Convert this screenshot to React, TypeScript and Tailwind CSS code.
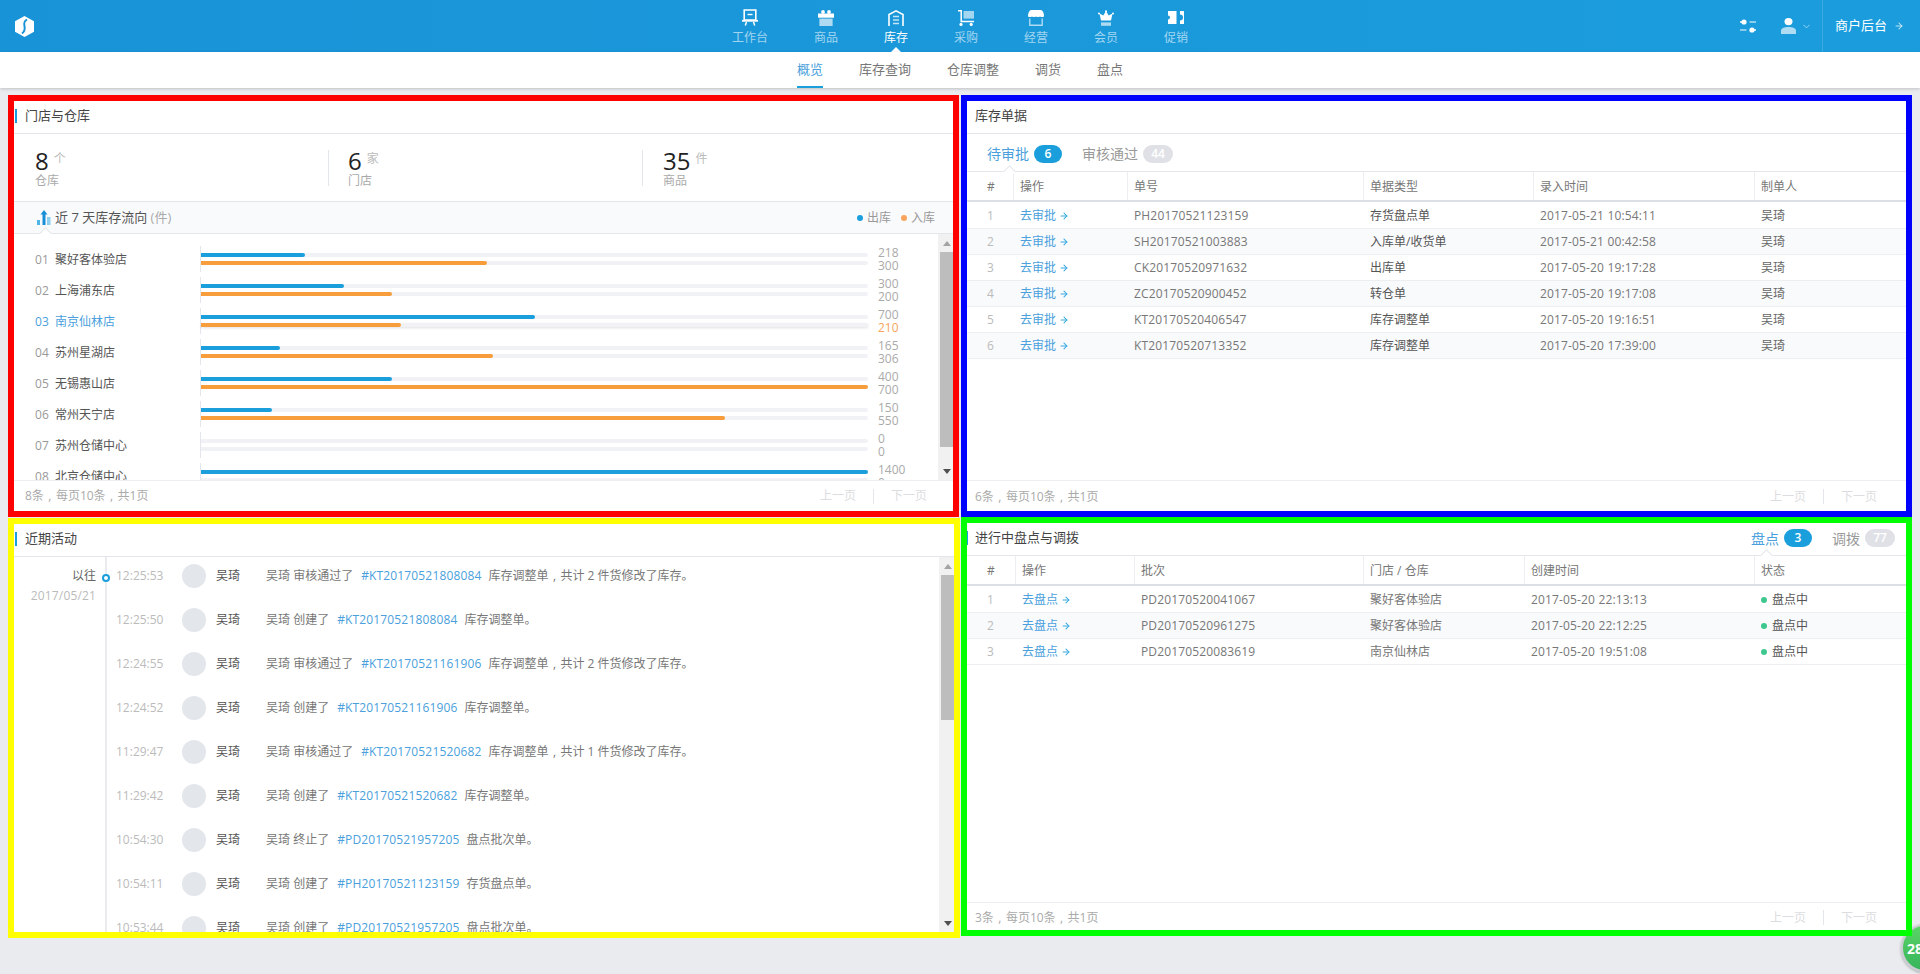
import { ArrowRight, ChevronDown } from "lucide-react";
import type { ReactNode } from "react";

const navItems = [
  { label: "工作台", icon: <BoardIcon /> },
  { label: "商品", icon: <GoodsIcon /> },
  { label: "库存", icon: <StockIcon />, active: true },
  { label: "采购", icon: <CartIcon /> },
  { label: "经营", icon: <ShopIcon /> },
  { label: "会员", icon: <CrownIcon /> },
  { label: "促销", icon: <TicketIcon /> },
];

const subNav = ["概览", "库存查询", "仓库调整", "调货", "盘点"];

const flowRows = [
  { name: "聚好客体验店", out: 218, into: 300 },
  { name: "上海浦东店", out: 300, into: 200 },
  { name: "南京仙林店", out: 700, into: 210, active: true },
  { name: "苏州星湖店", out: 165, into: 306 },
  { name: "无锡惠山店", out: 400, into: 700 },
  { name: "常州天宁店", out: 150, into: 550 },
  { name: "苏州仓储中心", out: 0, into: 0 },
  { name: "北京仓储中心", out: 1400, into: 0 },
];

const orderRows = [
  ["PH20170521123159", "存货盘点单", "2017-05-21 10:54:11", "吴琦"],
  ["SH20170521003883", "入库单/收货单", "2017-05-21 00:42:58", "吴琦"],
  ["CK20170520971632", "出库单", "2017-05-20 19:17:28", "吴琦"],
  ["ZC20170520900452", "转仓单", "2017-05-20 19:17:08", "吴琦"],
  ["KT20170520406547", "库存调整单", "2017-05-20 19:16:51", "吴琦"],
  ["KT20170520713352", "库存调整单", "2017-05-20 17:39:00", "吴琦"],
];

const checkRows = [
  ["PD20170520041067", "聚好客体验店", "2017-05-20 22:13:13"],
  ["PD20170520961275", "聚好客体验店", "2017-05-20 22:12:25"],
  ["PD20170520083619", "南京仙林店", "2017-05-20 19:51:08"],
];

const activities = [
  ["12:25:53", "审核通过了", "#KT20170521808084", "库存调整单，共计 2 件货修改了库存。"],
  ["12:25:50", "创建了", "#KT20170521808084", "库存调整单。"],
  ["12:24:55", "审核通过了", "#KT20170521161906", "库存调整单，共计 2 件货修改了库存。"],
  ["12:24:52", "创建了", "#KT20170521161906", "库存调整单。"],
  ["11:29:47", "审核通过了", "#KT20170521520682", "库存调整单，共计 1 件货修改了库存。"],
  ["11:29:42", "创建了", "#KT20170521520682", "库存调整单。"],
  ["10:54:30", "终止了", "#PD20170521957205", "盘点批次单。"],
  ["10:54:11", "创建了", "#PH20170521123159", "存货盘点单。"],
  ["10:53:44", "创建了", "#PD20170521957205", "盘点批次单。"],
];

function BoardIcon() {
  return (
    <svg width="16" height="17" viewBox="0 0 16 17" fill="none" stroke="white">
      <path d="M2.2 1h11.6v10H2.2z" strokeWidth="1.6" />
      <path d="M5.5 5.5h5" strokeWidth="1.4" />
      <path d="M0 11.8h16" strokeWidth="1.8" />
      <path d="M4.5 13l-1.2 3.5M11.5 13l1.2 3.5" strokeWidth="1.5" />
    </svg>
  );
}

function GoodsIcon() {
  return (
    <svg width="16" height="16" viewBox="0 0 16 16" fill="white">
      <circle cx="5" cy="2" r="1.9" />
      <circle cx="11" cy="2" r="1.9" />
      <rect x="0" y="3.5" width="16" height="4.2" />
      <rect x="1.4" y="8.6" width="13.2" height="7.4" opacity="0.65" />
    </svg>
  );
}

function StockIcon() {
  return (
    <svg width="16" height="16" viewBox="0 0 16 16" fill="none" stroke="white">
      <path d="M1 16V4.6L8 .9l7 3.7V16" strokeWidth="1.6" />
      <path d="M5 6.5h6M5 10h6M5 13.5h6" strokeWidth="1.3" opacity="0.75" />
    </svg>
  );
}

function CartIcon() {
  return (
    <svg width="16" height="16" viewBox="0 0 16 16" fill="none">
      <path d="M0 .8h3.2v10.8H16" stroke="white" strokeWidth="1.5" />
      <circle cx="3" cy="14.4" r="1.6" fill="white" />
      <circle cx="13.2" cy="14.4" r="1.6" fill="white" />
      <rect x="5.5" y="1" width="10.5" height="7.6" fill="white" opacity="0.6" />
    </svg>
  );
}

function ShopIcon() {
  return (
    <svg width="16" height="16" viewBox="0 0 16 16" fill="none">
      <path d="M3 0h10q3 1 3 6.500c-1.300.8-2.700.8-4 0-1.300.8-2.700.8-4 0-1.300.8-2.700.8-4 0-1.300.8-2.700.8-4 0Q0 1 3 0z" fill="white" />
      <path d="M1.800 8.500v6.700h12.400V8.500" stroke="white" strokeWidth="1.400" opacity="0.65" />
    </svg>
  );
}

function CrownIcon() {
  return (
    <svg width="16" height="16" viewBox="0 0 16 16" fill="white">
      <path d="M8 1l2.700 4.600L14.500 3.500 13 10.500H3L1.500 3.500l3.800 2.100z" />
      <circle cx="8" cy="1.200" r="1" />
      <circle cx="1" cy="3.400" r="1" />
      <circle cx="15" cy="3.400" r="1" />
      <rect x="3" y="12.400" width="10" height="3.400" opacity="0.65" />
    </svg>
  );
}

function TicketIcon() {
  return (
    <svg width="16" height="13" viewBox="0 0 16 13" fill="white">
      <path d="M0 0h8.500v13H0V8.500a2 2 0 0 0 0-4z" />
      <path d="M12 0h4v13h-4V9.500a3 3 0 0 0 0-6z" />
    </svg>
  );
}

function SlidersIcon() {
  return (
    <svg width="16" height="14" viewBox="0 0 16 14" fill="white">
      <circle cx="4" cy="3" r="2.600" />
      <rect x="0" y="2.300" width="4" height="1.400" />
      <rect x="9.500" y="2.300" width="6.500" height="1.400" opacity="0.7" />
      <circle cx="12" cy="11" r="2.600" />
      <rect x="12" y="10.300" width="4" height="1.400" />
      <rect x="0" y="10.300" width="6.500" height="1.400" opacity="0.7" />
    </svg>
  );
}

function UserIcon() {
  return (
    <svg width="15" height="16" viewBox="0 0 15 16" fill="white">
      <ellipse cx="7.500" cy="3.600" rx="4" ry="3.600" />
      <path d="M0 16v-3c0-3 3-4 7.500-4s7.500 1 7.500 4v3z" opacity="0.65" />
    </svg>
  );
}

function Logo() {
  return (
    <svg width="19" height="21" viewBox="0 0 19 21">
      <path d="M9.500 0L19 5.200v10.600L9.500 21 0 15.800V5.200z" fill="white" />
      <path d="M12 3.500C5 7.500 14 12.500 7 17.500" fill="none" stroke="#1993d7" strokeWidth="2" />
    </svg>
  );
}

function FlowIcon() {
  return (
    <svg width="14" height="15" viewBox="0 0 14 15">
      <rect x="0" y="10" width="3" height="5" fill="#4fb4e6" />
      <path d="M7 0l3.500 4.500H8.500V15h-3V4.500h-2z" fill="#1a8fd8" />
      <rect x="10" y="7" width="3.500" height="8" fill="#8fd0f0" />
    </svg>
  );
}

// the comma in the reference sits centred in its full-width cell
function Commas({ text }: { text: string }) {
  return (
    <>
      {text.split("，").map((part, i) => (
        <span key={i}>
          {i > 0 && <span className="inline-block w-3 text-center">,</span>}
          {part}
        </span>
      ))}
    </>
  );
}

function Notch({ className }: { className: string }) {
  return <span className={`absolute bottom-[-5px] h-[9px] w-[9px] rotate-45 border-l border-t border-[#e3e6ea] bg-white ${className}`} />;
}

function Badge({ n, on, className }: { n: number; on?: boolean; className: string }) {
  return (
    <span className={`flex h-[18px] items-center justify-center rounded-full text-[12px] font-semibold text-white ${on ? "bg-[#1a9fdc]" : "bg-[#dfe1e6]"} ${className}`}>
      {n}
    </span>
  );
}

function Scrollbar({ thumb }: { thumb: string }) {
  return (
    <div className="flex w-[15px] shrink-0 flex-col bg-[#f1f1f1]">
      <div className="flex h-[18px] shrink-0 items-center justify-center pl-[2px]">
        <svg width="8" height="5" viewBox="0 0 8 5"><path d="M4 0l4 5H0z" fill="#a3a3a3" /></svg>
      </div>
      <div className={`ml-[2px] shrink-0 bg-[#bdbdbd] ${thumb}`} />
      <div className="flex flex-1 items-end justify-center pb-[6px] pl-[2px]">
        <svg width="8" height="5" viewBox="0 0 8 5"><path d="M4 5l4-5H0z" fill="#505050" /></svg>
      </div>
    </div>
  );
}

function Footer({ text, className }: { text: string; className: string }) {
  return (
    <div className={`flex shrink-0 items-center justify-between border-t border-[#eceef1] bg-white text-[12px] ${className}`}>
      <span className="text-[#aaa]"><Commas text={text} /></span>
      <div className="flex items-center text-[#dcdde0]">
        <span>上一页</span>
        <span className="mx-[17px] h-[15px] w-px bg-[#e3e6ea]" />
        <span>下一页</span>
      </div>
    </div>
  );
}

function Panel({ frame, title, tick, bar = "pb-[2px]", right, children }: { frame: string; title: string; tick: string; bar?: string; right?: ReactNode; children: ReactNode }) {
  return (
    <section className={`relative z-10 flex flex-col border-[6px] bg-white ${frame}`}>
      <div className={`relative flex h-[33px] shrink-0 items-center border-b border-[#e3e6ea] ${bar}`}>
        <span className={`h-[14px] shrink-0 bg-[#1a9fdc] ${tick}`} />
        <span className="text-[13px] text-[#444]">{title}</span>
        {right}
      </div>
      {children}
    </section>
  );
}

function DataTable({ cols, head, rows, cell }: { cols: string; head: string[]; rows: string[][]; cell: (row: string[], index: number) => ReactNode[] }) {
  return (
    <div className="min-h-0 flex-1 text-[12px]">
      <div className={`grid h-[30px] border-b-2 border-[#dcdfe3] text-[#777] ${cols}`}>
        {head.map((h, i) => (
          <div key={h} className={i === 0 ? "flex items-center pl-5 pt-[2px]" : "flex items-center border-l border-[#eceef1] pl-[6px] pt-[2px]"}>{h}</div>
        ))}
      </div>
      {rows.map((row, r) => (
        <div key={row[0]} className={`grid items-center border-b border-[#eceef1] pt-px ${cols} ${r === 0 ? "h-[27px]" : "h-[26px]"} ${r % 2 === 1 ? "bg-[#f9fafc]" : "bg-white"}`}>
          <div className="pl-5 text-[#bbb]">{r + 1}</div>
          {cell(row, r).map((c, i) => (
            <div key={i} className="pl-[7px]">{c}</div>
          ))}
        </div>
      ))}
    </div>
  );
}

function GoLink({ label }: { label: string }) {
  return (
    <span className="flex items-center gap-[3px] text-[#4a9fdc]">
      {label}
      <ArrowRight size={10} strokeWidth={2.5} className="text-[#35a8e0]" />
    </span>
  );
}

function StorePanel() {
  return (
    <Panel frame="h-[422px] w-[951px] border-[#ff0000]" title="门店与仓库" tick="ml-px mr-2 w-[2px]">
      <div className="flex h-[68px] shrink-0 items-center border-b border-[#e3e6ea]">
        {[
          { n: "8", u: "个", l: "仓库" },
          { n: "6", u: "家", l: "门店" },
          { n: "35", u: "件", l: "商品" },
        ].map((s, i) => (
          <div key={s.l} className={i === 0 ? "h-[36px] w-[314px] shrink-0 pl-[21px]" : i === 1 ? "h-[36px] w-[314px] shrink-0 border-l border-[#e3e6ea] pl-[19px]" : "h-[36px] min-w-0 flex-1 border-l border-[#e3e6ea] pl-5"}>
            <div className="flex h-[22px] items-center gap-[5px]">
              <span className="text-[24px] leading-[22px] text-[#222]">{s.n}</span>
              <span className="-mt-[3px] text-[12px] text-[#bbb]">{s.u}</span>
            </div>
            <div className="mt-[2px] text-[12px] leading-[14px] text-[#aaa]">{s.l}</div>
          </div>
        ))}
      </div>
      <div className="relative flex h-[32px] shrink-0 items-center justify-between border-b border-[#e3e6ea] bg-[#f9fafc] pl-[23px] pr-[18px]">
        <div className="flex items-center gap-[4px] text-[13px] text-[#555]">
          <FlowIcon />
          <span>近 7 天库存流向 <span className="text-[#aaa]">(件)</span></span>
        </div>
        <div className="flex items-center text-[12px] text-[#999]">
          <span className="mr-[4px] h-[6px] w-[6px] rounded-full bg-[#1a9fdc]" />
          <span>出库</span>
          <span className="ml-[10px] mr-[4px] h-[6px] w-[6px] rounded-full bg-[#f9a45c]" />
          <span>入库</span>
        </div>
        <Notch className="left-[27px]" />
      </div>
      <div className="flex min-h-0 flex-1">
        <div className="min-w-0 flex-1 overflow-hidden pt-3 text-[12px]">
          {flowRows.map((row, i) => (
            <div key={row.name} className="flex h-[31px] shrink-0">
              <div className={`flex h-[26px] w-[186px] items-center pl-[21px] pt-px ${row.active ? "text-[#4a9fdc]" : "text-[#555]"}`}>
                <span className={`w-5 ${row.active ? "" : "text-[#999]"}`}>0{i + 1}</span>
                <span>{row.name}</span>
              </div>
              <div className="flex h-[26px] w-[668px] flex-col gap-1 border-l border-[#e3e6ea] pt-[7px]">
                <div className="h-1 rounded-r-[2px] bg-[#f1f2f6]">
                  <div className="h-1 rounded-r-[2px] bg-[#1a9fdc]" style={{ width: `${(row.out / 1400) * 100}%` }} />
                </div>
                <div className={`h-1 rounded-r-[2px] bg-[#f1f2f6] ${row.active ? "shadow-[0_1px_3px_rgba(0,0,0,0.12)]" : ""}`}>
                  <div className="h-1 rounded-r-[2px] bg-[#f79d3c]" style={{ width: `${(row.into / 700) * 100}%` }} />
                </div>
              </div>
              <div className="ml-[10px] text-[12px] leading-[13px] text-[#aaa]">
                <div>{row.out}</div>
                <div className={row.active ? "text-[#f9a45c]" : ""}>{row.into}</div>
              </div>
            </div>
          ))}
        </div>
        <Scrollbar thumb="h-[195px]" />
      </div>
      <Footer text="8条，每页10条，共1页" className="h-[31px] pl-[11px] pr-[26px]" />
    </Panel>
  );
}

function ActivityPanel() {
  return (
    <Panel frame="mt-px h-[420px] w-[952px] border-[#ffff00]" title="近期活动" tick="ml-px mr-2 w-[2px]" bar="pb-[3px]">
      <div className="flex min-h-0 flex-1 text-[12px]">
        <div className="flex min-w-0 flex-1 overflow-hidden">
          <div className="w-[91px] shrink-0 pr-[9px] pt-[10px] text-right">
            <div className="leading-[17px] text-[#666]">以往</div>
            <div className="mt-[3px] tracking-[0.15px] text-[#bbb]">2017/05/21</div>
          </div>
          <div className="relative min-w-0 flex-1 border-l-2 border-[#e9ebee] pl-[9px]">
            <span className="absolute left-[-5px] top-[17px] h-2 w-2 rounded-full border-2 border-[#1a9fdc] bg-white" />
            <div className="-mt-[3px]">
              {activities.map(([time, verb, code, rest]) => (
                <div key={time} className="flex h-[44px] shrink-0 items-center">
                  <span className="w-[66px] text-[#bbb]">{time}</span>
                  <span className="h-6 w-6 rounded-full bg-[#e3e6ea]" />
                  <span className="ml-[10px] w-[50px] text-[#555]">吴琦</span>
                  <span className="text-[#777]">吴琦 {verb}</span>
                  <span className="ml-2 mr-[7px] tracking-[0.15px] text-[#4a9fdc]">{code}</span>
                  <span className="text-[#777]"><Commas text={rest} /></span>
                </div>
              ))}
            </div>
          </div>
        </div>
        <Scrollbar thumb="h-[145px]" />
      </div>
    </Panel>
  );
}

function OrdersPanel() {
  return (
    <Panel frame="h-[422px] w-[951px] border-[#0000ff]" title="库存单据" tick="mr-2 w-0">
      <div className="relative flex h-[38px] shrink-0 items-center border-b border-[#e3e6ea] pl-5 pt-[2px] text-[14px]">
        <span className="text-[#4a9fdc]">待审批</span>
        <Badge n={6} on className="ml-[5px] w-[28px]" />
        <span className="ml-5 text-[#999]">审核通过</span>
        <Badge n={44} className="ml-[5px] w-[30px]" />
        <Notch className="left-[38px]" />
      </div>
      <DataTable
        cols="grid-cols-[46px_114px_236px_170px_221px_1fr]"
        head={["#", "操作", "单号", "单据类型", "录入时间", "制单人"]}
        rows={orderRows}
        cell={(row) => [
          <GoLink label="去审批" />,
          <span className="tracking-[0.15px] text-[#777]">{row[0]}</span>,
          <span className="text-[#555]">{row[1]}</span>,
          <span className="tracking-[0.15px] text-[#777]">{row[2]}</span>,
          <span className="text-[#666]">{row[3]}</span>,
        ]}
      />
      <Footer text="6条，每页10条，共1页" className="h-[31px] pl-2 pr-[29px] pt-px" />
    </Panel>
  );
}

function ChecksPanel() {
  return (
    <Panel
      frame="h-[419px] w-[951px] border-[#00ff00]"
      title="进行中盘点与调拨"
      tick="mr-[7px] w-px"
      right={
        <div className="ml-auto flex items-center pr-[11px] text-[14px]">
          <span className="text-[#4a9fdc]">盘点</span>
          <Badge n={3} on className="ml-[5px] w-[28px]" />
          <span className="ml-5 text-[#999]">调拨</span>
          <Badge n={77} className="ml-[5px] w-[30px]" />
          <Notch className="right-[135px]" />
        </div>
      }
    >
      <DataTable
        cols="grid-cols-[48px_119px_229px_161px_230px_1fr]"
        head={["#", "操作", "批次", "门店 / 仓库", "创建时间", "状态"]}
        rows={checkRows}
        cell={(row) => [
          <GoLink label="去盘点" />,
          <span className="tracking-[0.15px] text-[#777]">{row[0]}</span>,
          <span className="text-[#777]">{row[1]}</span>,
          <span className="tracking-[0.15px] text-[#777]">{row[2]}</span>,
          <span className="flex items-center gap-[5px] text-[#555]">
            <span className="h-[6px] w-[6px] rounded-full bg-[#3ec78f]" />
            盘点中
          </span>,
        ]}
      />
      <Footer text="3条，每页10条，共1页" className="h-[28px] pl-2 pr-[29px] pt-[2px]" />
    </Panel>
  );
}

export default function App() {
  return (
    <div className="relative h-screen overflow-hidden bg-[#e9ebef] font-['Open_Sans','Noto_Sans_CJK_SC',sans-serif] text-[12px]">
      <header className="grid h-[52px] grid-cols-[1fr_auto_1fr] bg-gradient-to-r from-[#1993d7] to-[#1b9ddd]">
        <div className="flex items-center pl-[15px]">
          <Logo />
        </div>
        <nav className="flex gap-[46px]">
          {navItems.map((item) => (
            <div key={item.label} className="relative flex flex-col items-center pt-[9px]">
              <div className="flex h-[17px] items-center">{item.icon}</div>
              <span className={`mt-1 text-[12px] leading-4 ${item.active ? "text-white" : "text-white/60"}`}>{item.label}</span>
              {item.active && (
                <span className="absolute bottom-0 h-0 w-0 border-x-[5px] border-b-[5px] border-x-transparent border-b-white" />
              )}
            </div>
          ))}
        </nav>
        <div className="flex items-center justify-end">
          <SlidersIcon />
          <div className="ml-[25px]"><UserIcon /></div>
          <ChevronDown size={11} className="ml-[5px] text-white/60" />
          <div className="ml-[10px] flex h-[52px] items-center border-l border-white/15 pl-[12px] pr-[16px] text-[13px] text-white">
            商户后台
            <ArrowRight size={10} strokeWidth={2.5} className="ml-[7px] text-white/70" />
          </div>
        </div>
      </header>

      <div className="relative z-20 flex h-[36px] justify-center gap-9 bg-white text-[13px] text-[#777] shadow-[0_1px_3px_rgba(0,0,0,0.18)]">
        {subNav.map((name, i) => (
          <div key={name} className={i === 0 ? "flex items-center border-b-2 border-[#1a9fdc] pt-[2px] text-[#4a9fdc]" : "flex items-center"}>
            {name}
          </div>
        ))}
      </div>

      <main className="flex pl-2 pt-[7px]">
        <div className="w-[952px] shrink-0">
          <StorePanel />
          <ActivityPanel />
        </div>
        <div className="ml-px w-[951px] shrink-0">
          <OrdersPanel />
          <ChecksPanel />
        </div>
      </main>

      <div className="absolute left-[1901px] top-[924px] flex h-[48px] w-[48px] items-center rounded-full border-2 border-[#c9ccd0] bg-gradient-to-b from-[#5ad466] to-[#37b45c] pl-[4px] text-[14px] font-bold text-white shadow-[0_1px_3px_rgba(0,0,0,0.3)]">
        28
      </div>
    </div>
  );
}
